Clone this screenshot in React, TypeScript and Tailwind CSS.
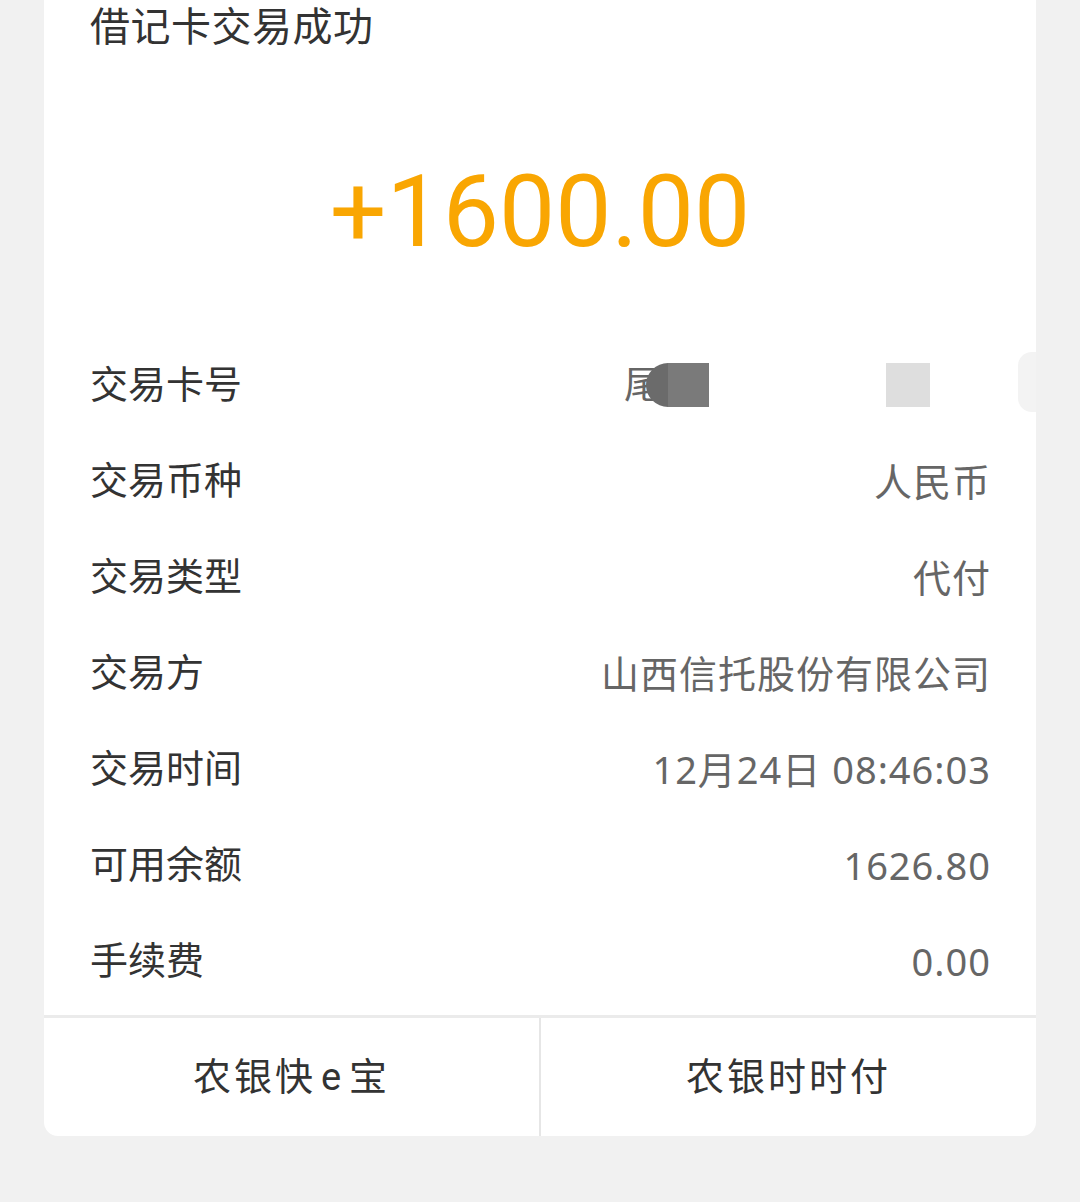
import React from "react";

const rows = [
  { label: "交易币种", value: "人民币" },
  { label: "交易类型", value: "代付" },
  { label: "交易方", value: "山西信托股份有限公司" },
  { label: "交易时间", value: "12月24日 08:46:03" },
  { label: "可用余额", value: "1626.80" },
  { label: "手续费", value: "0.00" },
];

const font = { fontFamily: '"Roboto", "Noto Sans CJK SC", sans-serif' };
const valueFont = { fontFamily: '"Noto Sans", "Noto Sans CJK SC", sans-serif' };

export default function App() {
  return (
    <div className="w-full h-[1202px] bg-[#f1f1f1] px-[44px]" style={font}>
      <div className="w-[992px] bg-white rounded-b-[14px] overflow-hidden">
        <div className="h-[56px] pl-[46px] text-[40px] tracking-[0.5px] leading-[56px] text-[#333]">
          借记卡交易成功
        </div>

        <div className="h-[281px] pt-[106px] text-center text-[100px] leading-[100px] text-[#f9a602]">
          +1600.00
        </div>

        {/* 卡号行 (已遮挡) */}
        <div className="relative h-[96px] flex items-center justify-between pl-[46px] pr-[47px] text-[38px] text-[#333]">
          <span>交易卡号</span>
          <div className="flex items-center text-[#666]">
            <span>尾</span>
            <div className="flex ml-[-16px]">
              <div className="w-[22px] h-[44px] rounded-l-full bg-[#6b6b6b]" />
              <div className="w-[41px] h-[44px] bg-[#7a7a7a]" />
            </div>
            <div className="w-[177px]" />
            <div className="w-[44px] h-[44px] bg-[#dedede]" />
            <div className="w-[59px]" />
          </div>
          <div className="absolute right-0 top-[15px] w-[18px] h-[60px] rounded-l-[14px] bg-[#f3f3f3]" />
        </div>

        {rows.map((r) => (
          <div
            key={r.label}
            className="h-[96px] flex items-center justify-between pl-[46px] pr-[45px] text-[38px]"
          >
            <span className="text-[#333]">{r.label}</span>
            <span className="text-[#666] tracking-[1px]" style={valueFont}>
              {r.value}
            </span>
          </div>
        ))}

        <div className="h-[6px]" />
        <div className="h-[3px] bg-[#ebebeb]" />

        <div className="flex h-[118px] text-[38px] text-[#333]">
          <div className="flex-1 flex items-center justify-center tracking-[3px]">
            农银快<span className="mx-[5px]">e</span>宝
          </div>
          <div className="w-[2px] bg-[#e6e6e6]" />
          <div className="flex-1 flex items-center justify-center tracking-[3px]">农银时时付</div>
        </div>
      </div>
    </div>
  );
}
